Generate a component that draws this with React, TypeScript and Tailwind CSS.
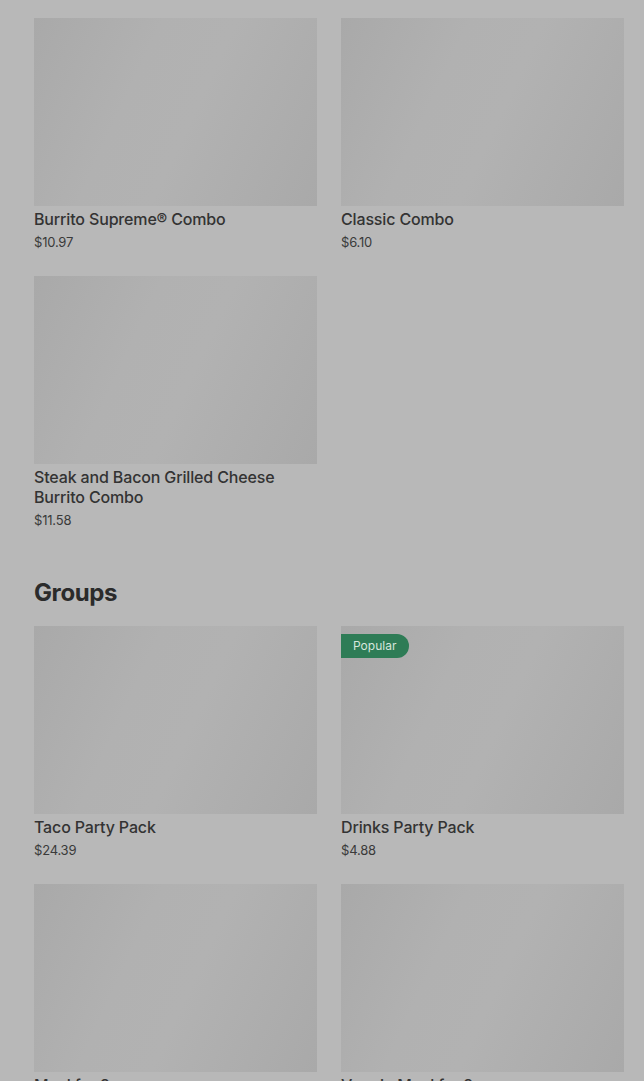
import React from 'react'

type Item = { name: string; price: string; badge?: string }

const combos: Item[] = [
  { name: 'Burrito Supreme® Combo', price: '$10.97' },
  { name: 'Classic Combo', price: '$6.10' },
  { name: 'Steak and Bacon Grilled Cheese Burrito Combo', price: '$11.58' },
]

const groups: Item[] = [
  { name: 'Taco Party Pack', price: '$24.39' },
  { name: 'Drinks Party Pack', price: '$4.88', badge: 'Popular' },
  { name: 'Meal for 2', price: '$15.49' },
  { name: 'Veggie Meal for 2', price: '$14.29' },
]

function ItemCard({ item }: { item: Item }) {
  return (
    <div className="flex flex-col">
      <div className="relative h-[188px] w-full bg-[linear-gradient(115deg,#a9a9a9_0%,#b1b1b1_35%,#b2b2b2_55%,#a9a9a9_100%)]">
        {item.badge && (
          <span className="absolute left-0 top-[8px] flex h-[24px] items-center rounded-r-full bg-[#2e7c56] pl-[12px] pr-[13px] text-[12px] text-[#d6e6dc]">
            {item.badge}
          </span>
        )}
      </div>
      <div className="mt-[3px] text-[16px] font-medium leading-[20px] tracking-[-0.15px] text-[#333333]">{item.name}</div>
      <div className="mt-[4px] text-[13px] leading-[18px] tracking-[-0.2px] text-[#3a3a3a]">{item.price}</div>
    </div>
  )
}

export default function App() {
  return (
    <div
      className="min-h-screen overflow-hidden bg-[#b8b8b8] pl-[34px] pr-[20px] pt-[18px]"
      style={{ fontFamily: 'Inter, "Liberation Sans", sans-serif' }}
    >
      <div className="grid grid-cols-2 gap-x-[24px] gap-y-[25px]">
        {combos.map((c) => (
          <ItemCard key={c.name} item={c} />
        ))}
      </div>

      <h2 className="mt-[48px] text-[24px] font-bold leading-[32px] tracking-[-0.4px] text-[#2b2b2b]">Groups</h2>

      <div className="mt-[17px] grid grid-cols-2 gap-x-[24px] gap-y-[25px]">
        {groups.map((g) => (
          <ItemCard key={g.name} item={g} />
        ))}
      </div>
    </div>
  )
}
